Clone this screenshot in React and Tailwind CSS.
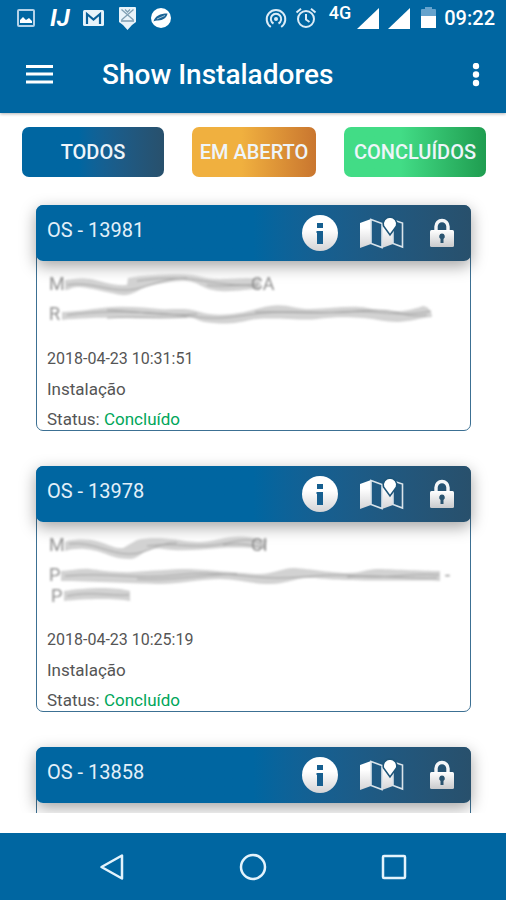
import { useId } from 'react';

const orders = [
  {
    id: '13981',
    date: '2018-04-23 10:31:51',
    type: 'Instalação',
    status: 'Concluído',
    client: {
      first: 'M',
      last: 'CA',
      shape:
        'M18 7 C26 6 34 4 44 6 S66 13 80 12 L81 5 C96 2 116 1 133 1 S156 6 173 6 S200 4 213 6 L211 16 C200 16 190 19 173 18 S152 9 140 8 S118 10 106 12 S88 21 80 22 S58 18 40 15 S26 17 18 17 Z',
      strands: ['M20 12 C42 8 60 18 80 17 S110 6 140 5', 'M90 8 C110 5 130 4 150 7 S190 14 214 11', 'M160 12 C180 15 195 10 212 14'],
    },
    address: {
      first: 'R',
      last: '',
      shape:
        'M15 9 C30 9 48 5 66 4 S100 5 113 6 S138 4 153 9 S190 12 213 5 S246 6 263 6 S298 3 313 4 S346 14 376 3 Q384 4 385 14 C372 15 362 19 350 19 S330 16 316 15 S284 14 270 16 S220 13 203 17 S180 21 166 20 S150 16 146 15 S100 16 86 15 S32 15 15 17 Z',
      strands: ['M20 12 C50 8 80 8 120 11 S160 18 200 12 S260 11 300 9 S350 15 384 8', 'M60 7 C90 8 120 14 150 11', 'M60 15 C90 13 110 16 140 14', 'M208 9 C240 8 260 12 310 8 S350 16 380 12'],
    },
  },
  {
    id: '13978',
    date: '2018-04-23 10:25:19',
    type: 'Instalação',
    status: 'Concluído',
    client: {
      first: 'M',
      last: 'CI',
      shape:
        'M18 8 C24 5 40 4 53 8 S66 14 76 14 L90 6 C100 3 116 4 126 5 S150 11 173 5 S206 4 220 6 L218 15 C208 14 190 13 173 14 S136 18 116 15 S94 25 83 25 S64 22 56 19 S32 12 18 17 Z',
      strands: ['M22 10 C46 7 62 20 82 20 S110 8 130 9', 'M100 12 C130 8 150 16 180 9 S208 9 218 12', 'M176 11 C196 8 206 12 218 14'],
    },
    address: {
      first: 'P',
      last: '-',
      wrapped: 'P',
      shape:
        'M14 7 C24 7 34 4 43 5 S68 9 86 8 S126 5 140 5 S200 10 213 10 S236 4 246 4 S285 9 300 9 S320 5 330 5 S376 7 393 7 L393 17 C376 16 330 17 300 16 S272 14 260 14 S240 20 223 20 S190 15 173 15 S130 20 113 20 S40 17 14 17 Z M17 27 C36 24 66 22 83 27 L83 37 C66 34 36 35 17 37 Z',
      strands: ['M18 12 C60 8 90 16 130 11 S200 14 230 14 S280 9 310 12 S360 9 392 11', 'M90 15 C120 17 150 11 190 10', 'M300 13 C330 10 350 15 390 14', 'M20 32 C44 27 60 32 82 31'],
    },
  },
  { id: '13858' },
];

function HotspotIcon() {
  return (
    <svg className="h-[22px] w-[22px]" viewBox="0 0 22 22" fill="none" stroke="#dcecf7" strokeWidth="2">
      <circle cx="11" cy="12" r="2" fill="#dcecf7" stroke="none" />
      <path d="M8.5 16.5 A5.2 5.2 0 1 1 13.5 16.5" />
      <path d="M5.8 20 A9.3 9.3 0 1 1 16.2 20" />
    </svg>
  );
}

function AlarmIcon() {
  return (
    <svg className="h-[22px] w-[22px]" viewBox="0 0 22 22" fill="none" stroke="#dcecf7" strokeWidth="2">
      <circle cx="11" cy="12" r="8" />
      <path d="M11 7 V12.5 L14.5 15 M1.5 5.5 L6 1.8 M20.5 5.5 L16 1.8" />
    </svg>
  );
}

function SignalIcon() {
  return (
    <svg className="h-[21px] w-[22px]" viewBox="0 0 22 21">
      <path d="M22 0 V21 H0 Z" fill="#fff" />
    </svg>
  );
}

function BatteryIcon() {
  return (
    <svg className="h-[22px] w-[15px]" viewBox="0 0 15 22">
      <path d="M4 0 H11 V2 H14 Q15 2 15 3 V9 H0 V3 Q0 2 1 2 H4 Z" fill="#66a3cd" />
      <path d="M0 9 H15 V21 H0 Z" fill="#fff" />
    </svg>
  );
}

function StatusBar() {
  return (
    <div className="flex h-9 items-center justify-between pl-[17px] pr-[11px] text-white">
      <div className="flex items-center">
        <svg className="h-[18px] w-[18px]" viewBox="0 0 18 18">
          <rect x="1" y="1" width="16" height="16" rx="1" fill="none" stroke="#b4d2e8" strokeWidth="2" />
          <path d="M3 14 V11 L6 8 L9 11 L12 9 L15 12 V14 Z" fill="#fff" />
        </svg>
        <span className="ml-[15px] w-5 text-[24px] leading-none font-bold italic">IJ</span>
        <svg className="ml-[13px] h-4 w-[21px]" viewBox="0 0 21 16">
          <rect width="21" height="16" rx="1.5" fill="#e8f3fa" />
          <path d="M4 14 V4 L10.500 9.500 L17 4 V14" fill="none" stroke="#0a5f98" strokeWidth="2.200" />
        </svg>
        <svg className="ml-[15px] h-[23px] w-[17px]" viewBox="0 0 17 23">
          <path d="M1 0 H16 Q17 0 17 1 V15 L13 18 L8.500 23 L4 18 L0 15 V1 Q0 0 1 0 Z" fill="#e8f3fa" />
          <path d="M2.500 2.500 L14.500 13 M14.500 2.500 L2.500 13 M6 2.500 L8.500 5 L11 2.500 M2 14 H15" fill="none" stroke="#7f9fb3" strokeWidth="1.300" />
        </svg>
        <svg className="ml-[15px] h-5 w-5" viewBox="0 0 20 20">
          <circle cx="10" cy="10" r="10" fill="#fff" />
          <path d="M2.500 13.500 C4 8 9 5.500 16.500 5.500 C16 9.500 12 12.500 7 12.500 C5 12.500 4 12.500 2.500 13.500 Z" fill="#1b6496" />
          <path d="M6 11 L14 7.500" stroke="#9cc0d8" strokeWidth="1" />
        </svg>
      </div>
      <div className="flex items-center">
        <HotspotIcon />
        <span className="ml-2">
          <AlarmIcon />
        </span>
        <span className="ml-3 pb-2.5 text-[18px] leading-none font-medium">4G</span>
        <span className="ml-1.5">
          <SignalIcon />
        </span>
        <span className="ml-[9px]">
          <SignalIcon />
        </span>
        <span className="ml-[11px]">
          <BatteryIcon />
        </span>
        <span className="ml-2 text-[20px] leading-none font-medium">09:22</span>
      </div>
    </div>
  );
}

function InfoIcon() {
  const id = useId();
  return (
    <svg className="h-9 w-9" viewBox="0 0 36 36">
      <linearGradient id={id} x2="0" y2="1">
        <stop offset="0.4" stopColor="#fff" />
        <stop offset="1" stopColor="#d4d4d6" />
      </linearGradient>
      <circle cx="18" cy="18" r="18" fill={`url(#${id})`} />
      <path d="M15 8 H21 V13 H15 Z M14.500 16 H21 V29 H15 V18 H14.500 Z" fill="#165f90" />
    </svg>
  );
}

function MapIcon() {
  const id = useId();
  return (
    <svg className="h-[34px] w-[45px]" viewBox="0 0 45 34">
      <linearGradient id={id} x2="0" y2="1">
        <stop offset="0.3" stopColor="#fff" />
        <stop offset="1" stopColor="#d4d4d6" />
      </linearGradient>
      <path d="M1 7 L12 3 V28 L1 32 Z M23 7 L34 4 V28 L23 32 Z" fill={`url(#${id})`} />
      <path d="M12 3.500 L23 7.500 V31.500 L12 27.500 Z M34 4 L43.500 7 V31 L34 27.500 Z" fill="none" stroke="#d9e3ea" strokeWidth="1.600" />
      <path d="M31 1 A7 7 0 0 1 37.500 10 L31 19 L24.500 10 A7 7 0 0 1 31 1 Z" fill="#fff" stroke="#1d5579" strokeWidth="1.600" />
    </svg>
  );
}

function LockIcon() {
  const id = useId();
  return (
    <svg className="h-[30px] w-6" viewBox="0 0 24 30">
      <linearGradient id={id} x2="0" y2="1">
        <stop offset="0" stopColor="#fff" />
        <stop offset="1" stopColor="#c9cacc" />
      </linearGradient>
      <path d="M6 13 V8.500 A6 6 0 0 1 18 8.500 V13" fill="none" stroke="#f4f6f8" strokeWidth="3.400" />
      <rect y="12" width="24" height="17" rx="1.500" fill={`url(#${id})`} />
      <path d="M12 15.500 A3 3 0 0 1 13.500 21 V25 H10.500 V21 A3 3 0 0 1 12 15.500 Z" fill="#2a5470" />
    </svg>
  );
}

// Client data is smudged out, only the outer letters stay readable
function Smudge({ data }) {
  return (
    <div className={`relative text-[18px] text-[#909090] blur-[1px] ${data.wrapped ? 'h-[42px]' : 'h-[22px]'}`}>
      <svg className="absolute inset-0 h-full w-full overflow-visible" fill="none">
        <path d={data.shape} fill="#d2d2d2" />
        {data.strands.map((d) => (
          <path key={d} d={d} stroke="#a4a4a4" strokeWidth="1" />
        ))}
      </svg>
      <div className="relative flex h-[22px] items-center">
        <span className="w-4 pl-0.5">{data.first}</span>
        {data.last === '-' ? (
          <span className="ml-auto pr-5">-</span>
        ) : (
          <span className="ml-[188px]">{data.last}</span>
        )}
      </div>
      {data.wrapped && <span className="relative block pl-1 leading-[20px]">{data.wrapped}</span>}
    </div>
  );
}

function OrderCard({ order }) {
  return (
    <article className="min-h-[225px] shrink-0 rounded-[7px] border border-[#3c7093] text-[17px] leading-[22px] text-[#555]">
      <header className="-mx-px -mt-px flex h-14 items-center rounded-[7px] bg-linear-to-r from-[#0066a1] from-50% to-[#28506c] pr-[17px] pl-[11px] shadow-[0_5px_16px_rgba(0,0,0,0.36)]">
        <h2 className="mr-auto pb-1.5 text-[20px] leading-6 text-[#e3f0f9]">OS - {order.id}</h2>
        <button type="button" aria-label="Informações">
          <InfoIcon />
        </button>
        <button type="button" aria-label="Mapa" className="ml-[21px]">
          <MapIcon />
        </button>
        <button type="button" aria-label="Bloqueado" className="ml-[26px]">
          <LockIcon />
        </button>
      </header>
      {order.client && (
        <div className="flex flex-col gap-2 pt-3 pl-2.5">
          <Smudge data={order.client} />
          <Smudge data={order.address} />
          <p className="mt-[15px] text-[16px]">{order.date}</p>
          <p>{order.type}</p>
          <p>
            Status: <span className="text-[#00a65a]">{order.status}</span>
          </p>
        </div>
      )}
    </article>
  );
}

export default function App() {
  return (
    <div className="flex h-screen flex-col bg-white font-[Roboto,sans-serif]">
      <div className="relative z-10 bg-[#0066a1] shadow-[0_1px_3px_rgba(0,0,0,0.3)]">
        <StatusBar />
        <header className="flex h-[77px] items-center px-[26px] text-white">
          <button type="button" aria-label="Menu">
            <svg className="h-5 w-[27px]" viewBox="0 0 27 20">
              <path d="M0 1.500 H27 M0 9 H27 M0 17 H27" stroke="#fff" strokeWidth="3" />
            </svg>
          </button>
          <h1 className="ml-[49px] text-[28px] leading-8 font-medium">Show Instaladores</h1>
          <button type="button" aria-label="Mais opções" className="ml-auto">
            <svg className="h-6 w-2" viewBox="0 0 8 24" fill="#fff">
              <circle cx="4" cy="3" r="3.200" />
              <circle cx="4" cy="11.500" r="3.200" />
              <circle cx="4" cy="20" r="3.200" />
            </svg>
          </button>
        </header>
      </div>

      <nav className="mt-3.5 flex h-[50px] shrink-0 gap-7 pr-5 pl-[22px] text-[20px] font-medium text-[#eef5fa]">
        <button type="button" className="flex-1 rounded-[7px] bg-linear-to-r from-[#0066a1] from-40% to-[#28506c]">
          TODOS
        </button>
        <button type="button" className="w-[124px] rounded-[7px] bg-linear-to-r from-[#f0b03f] from-40% to-[#c9762f]">
          EM ABERTO
        </button>
        <button type="button" className="flex-1 rounded-[7px] bg-linear-to-r from-[#42dc86] from-40% to-[#1f9d50]">
          CONCLUÍDOS
        </button>
      </nav>

      <main className="mb-5 flex min-h-0 flex-1 flex-col gap-[35px] overflow-hidden pt-7 pr-[35px] pl-9">
        {orders.map((order) => (
          <OrderCard key={order.id} order={order} />
        ))}
      </main>

      <footer className="flex h-[67px] shrink-0 items-center justify-center gap-[113px] bg-[#0066a1]">
        <button type="button" aria-label="Voltar">
          <svg className="h-7 w-7" viewBox="0 0 28 28" fill="none" stroke="#e3f3fc" strokeWidth="2.500" strokeLinejoin="round">
            <path d="M24 2.500 V25.500 L3.500 14 Z" />
          </svg>
        </button>
        <button type="button" aria-label="Início">
          <svg className="h-7 w-7" viewBox="0 0 28 28" fill="none" stroke="#e3f3fc" strokeWidth="2.500">
            <circle cx="14" cy="14" r="12" />
          </svg>
        </button>
        <button type="button" aria-label="Recentes">
          <svg className="h-7 w-7" viewBox="0 0 28 28" fill="none" stroke="#e3f3fc" strokeWidth="2.500">
            <rect x="3" y="3" width="22" height="22" rx="1" />
          </svg>
        </button>
      </footer>
    </div>
  );
}
